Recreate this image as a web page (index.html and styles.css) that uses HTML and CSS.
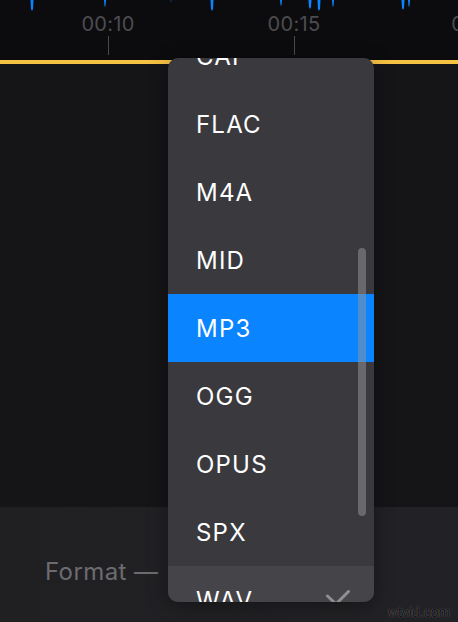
FILE: index.html
```html
<!DOCTYPE html>
<html lang="en">
<head>
    <meta charset="UTF-8">
    <meta name="viewport" content="width=device-width, initial-scale=1.0">
    <title>Format</title>
    <link rel="stylesheet" href="styles.css">
</head>
<body>
    <div class="screen">
        <div class="timeline">
            <svg class="wave" width="458" height="14" viewBox="0 0 458 14">
                <path d="M30.5 0 L33.5 0 L33 9 L32 11 L31 9 Z" />
                <path d="M104 0 L106 0 L105.5 6 L105 7 L104.5 6 Z" />
                <path d="M170.5 0 L171.5 0 L171 3 Z" opacity="0.6" />
                <path d="M210.5 0 L213.5 0 L213 9 L212 11 L211 9 Z" />
                <path d="M280 0 L282 0 L281.5 5 L281 6 L280.5 5 Z" />
                <path d="M308.5 0 L311.5 0 L311 7 L310 9 L309 7 Z" />
                <path d="M317.5 0 L320.5 0 L320 9 L319 11 L318 9 Z" />
                <path d="M332 0 L334 0 L333.5 6 L333 7 L332.5 6 Z" />
                <path d="M401.5 0 L404.5 0 L404 8 L403 10 L402 8 Z" />
                <path d="M408 0 L410 0 L409.5 6 L409 7 L408.5 6 Z" />
            </svg>
            <div class="ruler">
                <div class="mark"><span>00:10</span><i></i></div>
                <div class="mark"><span>00:15</span><i></i></div>
                <div class="mark"><span>00:20</span><i></i></div>
            </div>
        </div>
        <div class="playhead"></div>
        <div class="track"></div>
        <div class="panel">
            <span class="format">Format —</span>
            <span class="watermark">wtvid.com</span>
        </div>

        <div class="menu">
            <ul class="options">
                <li>CAF</li>
                <li>FLAC</li>
                <li>M4A</li>
                <li>MID</li>
                <li class="active">MP3</li>
                <li>OGG</li>
                <li>OPUS</li>
                <li>SPX</li>
                <li class="selected">WAV
                    <svg class="check" width="24" height="20" viewBox="0 0 24 20">
                        <polyline points="1.5,6 10,14 22.5,1.5" />
                    </svg>
                </li>
            </ul>
            <div class="scrollbar"></div>
        </div>
    </div>
</body>
</html>
```

FILE: styles.css
```css
body {
    margin: 0;
    padding: 0;
    background-color: #0c0c0e;
    font-family: Inter, "Noto Sans", sans-serif;
}
.screen {
    width: 458px;
    height: 622px;
    position: relative;
    overflow: hidden;
    display: flex;
    flex-direction: column;
}
.timeline {
    height: 60px;
    background-color: #0c0c0e;
}
.wave {
    display: block;
    fill: #0a84ff;
}
.ruler {
    display: flex;
    padding-left: 15px;
    margin-top: -2px;
}
.mark {
    flex: 0 0 186px;
    display: flex;
    flex-direction: column;
    align-items: center;
}
.mark span {
    font-size: 20px;
    line-height: 24px;
    letter-spacing: 0.3px;
    color: #4c4c50;
}
.mark i {
    display: block;
    width: 1px;
    height: 19px;
    background-color: #4a4a4e;
}
.playhead {
    height: 4px;
    background-color: #f6c244;
}
.track {
    flex: 1;
    background-color: #151518;
}
.panel {
    height: 115px;
    background: linear-gradient(90deg, #202023, #222226);
    position: relative;
}
.format {
    position: absolute;
    left: 45px;
    top: 50px;
    font-size: 24px;
    line-height: 30px;
    letter-spacing: 0.4px;
    color: #6c6c70;
}
.watermark {
    position: absolute;
    left: 388px;
    top: 97px;
    font-family: "Liberation Sans", Arial, sans-serif;
    font-size: 14px;
    color: #101010;
    text-shadow: 0 0 1px rgba(255, 255, 255, 0.45);
}
.menu {
    position: absolute;
    left: 168px;
    top: 58px;
    width: 206px;
    height: 544px;
    background-color: #3a3a3e;
    border-radius: 10px;
    overflow: hidden;
    box-shadow: 0 4px 20px rgba(0, 0, 0, 0.35);
}
.options {
    list-style: none;
    margin: -36px 0 0 0;
    padding: 0;
}
.options li {
    height: 68px;
    display: flex;
    align-items: center;
    justify-content: space-between;
    padding: 0 24px 0 28px;
    font-size: 24px;
    letter-spacing: 1.2px;
    color: #ffffff;
}
.options li.active {
    background-color: #0a84ff;
}
.options li.selected {
    background-color: #454549;
}
.check {
    fill: none;
    stroke: #8e8e93;
    stroke-width: 3;
    stroke-linecap: round;
    stroke-linejoin: round;
}
.scrollbar {
    position: absolute;
    left: 190px;
    top: 190px;
    width: 8px;
    height: 268px;
    border-radius: 4px;
    background-color: rgba(150, 150, 155, 0.5);
}
```
